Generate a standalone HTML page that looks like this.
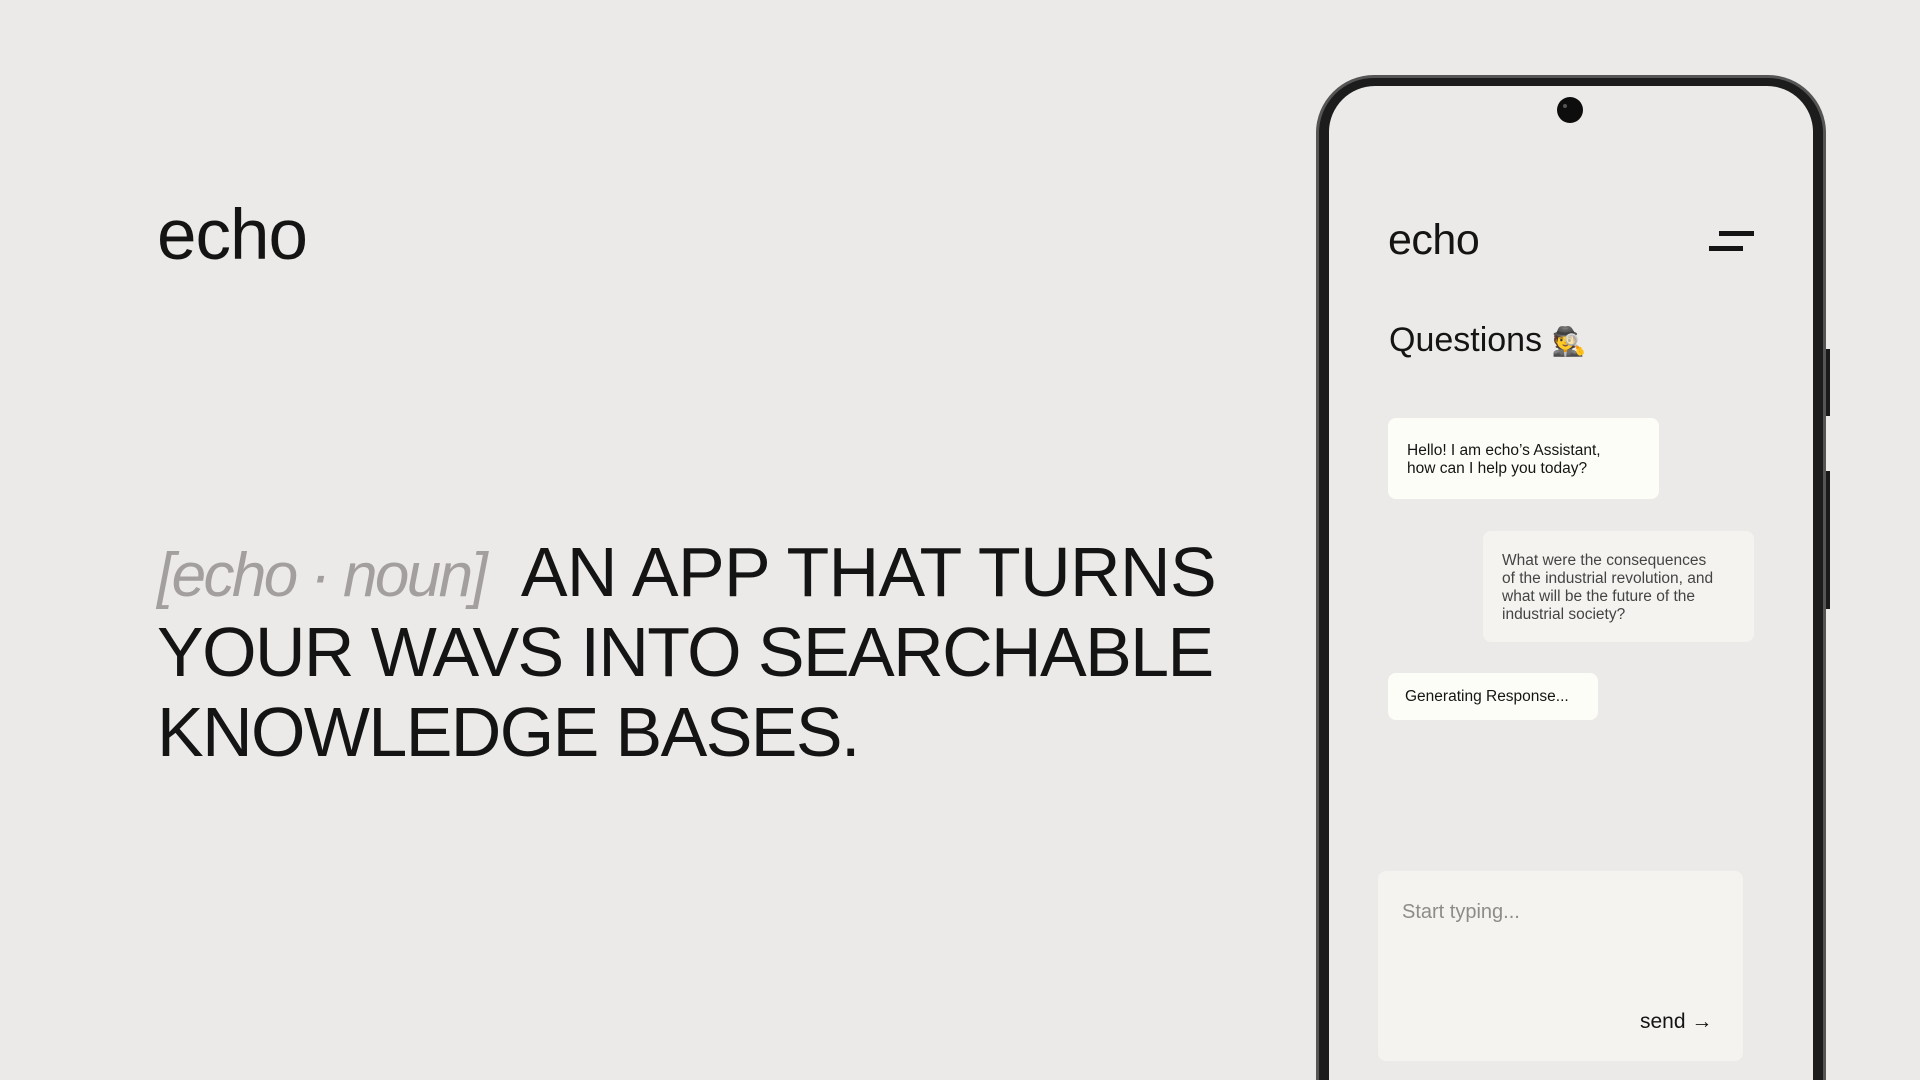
<!DOCTYPE html>
<html><head><meta charset="utf-8"><style>
*{margin:0;padding:0;box-sizing:border-box}
html{width:1920px;height:1080px;overflow:hidden}
body{width:1920px;height:1080px;background:#ebeae8;font-family:"Liberation Sans",sans-serif;color:#141414;position:relative;overflow:hidden}
.abs{position:absolute;white-space:nowrap}
.logo{left:157px;top:200px;font-size:71px;line-height:1;letter-spacing:-1px}
.h{left:157px;font-size:70px;line-height:1;letter-spacing:-1.6px}
.noun{font-style:italic;color:#a39f9e;font-size:62px;letter-spacing:-2.6px}
.phone{left:1316px;top:75px;width:510px;height:1005px;border-radius:58px 58px 0 0;background:#1c1c1c;border:3px solid #555;border-bottom:none}
.screen{left:1329px;top:86px;width:484px;height:994px;border-radius:46px 46px 0 0;background:#ebeae8}
.btn{background:#1a1a1a;width:6px;left:1824px}
.bub{border-radius:8px;font-size:15.5px;line-height:18px;white-space:nowrap}
</style></head><body>
<div class="abs logo">echo</div>
<div class="abs h" style="top:537px"><span class="noun">[echo · noun]</span>&nbsp;&nbsp;<span style="letter-spacing:-0.6px">AN APP THAT TURNS</span></div>
<div class="abs h" style="top:617px">YOUR WAVS INTO SEARCHABLE</div>
<div class="abs h" style="top:697px">KNOWLEDGE BASES.</div>

<div class="abs btn" style="top:349px;height:67px"></div>
<div class="abs btn" style="top:471px;height:138px"></div>
<div class="abs phone"></div>
<div class="abs screen"></div>
<div class="abs" style="left:1557px;top:97px;width:26px;height:26px;border-radius:50%;background:#0d0d0d"></div>
<div class="abs" style="left:1563px;top:104px;width:4px;height:4px;border-radius:50%;background:#555"></div>

<div class="abs" style="left:1388px;top:219px;font-size:43px;line-height:1;letter-spacing:-0.5px">echo</div>
<div class="abs" style="left:1719px;top:231px;width:35px;height:5px;background:#141414"></div>
<div class="abs" style="left:1709px;top:246px;width:34px;height:5px;background:#141414"></div>
<div class="abs" style="left:1389px;top:323px;font-size:34px;line-height:1">Questions <span style="font-family:'Noto Color Emoji','DejaVu Sans',sans-serif;font-size:28px">🕵️</span></div>

<div class="abs bub" style="left:1388px;top:418px;width:271px;height:81px;background:#fdfdf8;padding:24px 19px">Hello! I am echo’s Assistant,<br>how can I help you today?</div>
<div class="abs bub" style="left:1483px;top:531px;width:271px;height:111px;background:#f4f3f0;color:#444;padding:21px 19px">What were the consequences<br>of the industrial revolution, and<br>what will be the future of the<br>industrial society?</div>
<div class="abs bub" style="left:1388px;top:673px;width:210px;height:47px;background:#fdfdf8;padding:15px 17px">Generating Response...</div>

<div class="abs" style="left:1378px;top:871px;width:365px;height:190px;background:#f4f3f0;border-radius:8px"></div>
<div class="abs" style="left:1402px;top:901px;font-size:20px;color:#8e8c89">Start typing...</div>
<div class="abs" style="left:1640px;top:1010px;font-size:21px">send →</div>
</body></html>
